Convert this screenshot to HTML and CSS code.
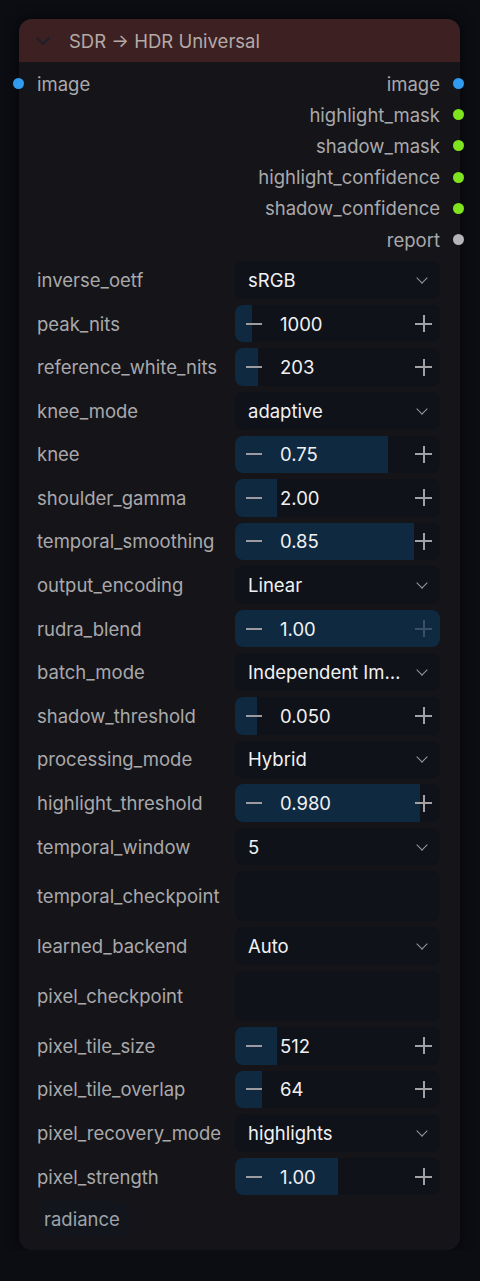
FILE: index.html
```html
<!DOCTYPE html>
<html lang="en">
<head>
  <meta charset="UTF-8" />
  <title>SDR → HDR Universal</title>
  <link rel="stylesheet" href="styles.css">
</head>
<body>
  <div class="node">
    <div class="node-title">
      <svg class="collapse" width="16" height="10" viewBox="0 0 16 10"><path d="M2 2 L8 8 L14 2" fill="none" stroke="#1d1f2b" stroke-width="1.8" stroke-linecap="round" stroke-linejoin="round"/></svg>
      <span>SDR → HDR Universal</span>
    </div>

    <div class="node-body">
      <div class="slots">
        <div class="slot">
          <div class="slot-in"><span class="dot blue"></span>image</div>
          <div class="slot-out">image<span class="dot blue"></span></div>
        </div>
        <div class="slot"><div></div><div class="slot-out">highlight_mask<span class="dot green"></span></div></div>
        <div class="slot"><div></div><div class="slot-out">shadow_mask<span class="dot green"></span></div></div>
        <div class="slot"><div></div><div class="slot-out">highlight_confidence<span class="dot green"></span></div></div>
        <div class="slot"><div></div><div class="slot-out">shadow_confidence<span class="dot green"></span></div></div>
        <div class="slot"><div></div><div class="slot-out">report<span class="dot grey"></span></div></div>
      </div>

      <div class="widgets">
        <div class="row">
          <div class="label">inverse_oetf</div>
          <div class="combo"><span class="value">sRGB</span><span class="chev"></span></div>
        </div>
        <div class="row">
          <div class="label">peak_nits</div>
          <div class="number"><div class="fill" style="width: 8.3%"></div><span class="minus"></span><span class="value">1000</span><span class="plus"></span></div>
        </div>
        <div class="row">
          <div class="label">reference_white_nits</div>
          <div class="number"><div class="fill" style="width: 11.2%"></div><span class="minus"></span><span class="value">203</span><span class="plus"></span></div>
        </div>
        <div class="row">
          <div class="label">knee_mode</div>
          <div class="combo"><span class="value">adaptive</span><span class="chev"></span></div>
        </div>
        <div class="row">
          <div class="label">knee</div>
          <div class="number"><div class="fill" style="width: 74.6%"></div><span class="minus"></span><span class="value">0.75</span><span class="plus"></span></div>
        </div>
        <div class="row">
          <div class="label">shoulder_gamma</div>
          <div class="number"><div class="fill" style="width: 20.5%"></div><span class="minus"></span><span class="value">2.00</span><span class="plus"></span></div>
        </div>
        <div class="row">
          <div class="label">temporal_smoothing</div>
          <div class="number"><div class="fill" style="width: 87.3%"></div><span class="minus"></span><span class="value">0.85</span><span class="plus"></span></div>
        </div>
        <div class="row">
          <div class="label">output_encoding</div>
          <div class="combo"><span class="value">Linear</span><span class="chev"></span></div>
        </div>
        <div class="row">
          <div class="label">rudra_blend</div>
          <div class="number"><div class="fill" style="width: 100%"></div><span class="minus"></span><span class="value">1.00</span><span class="plus dim"></span></div>
        </div>
        <div class="row">
          <div class="label">batch_mode</div>
          <div class="combo"><span class="value">Independent Im…</span><span class="chev"></span></div>
        </div>
        <div class="row">
          <div class="label">shadow_threshold</div>
          <div class="number"><div class="fill" style="width: 10.7%"></div><span class="minus"></span><span class="value">0.050</span><span class="plus"></span></div>
        </div>
        <div class="row">
          <div class="label">processing_mode</div>
          <div class="combo"><span class="value">Hybrid</span><span class="chev"></span></div>
        </div>
        <div class="row">
          <div class="label">highlight_threshold</div>
          <div class="number"><div class="fill" style="width: 90.2%"></div><span class="minus"></span><span class="value">0.980</span><span class="plus"></span></div>
        </div>
        <div class="row">
          <div class="label">temporal_window</div>
          <div class="combo"><span class="value">5</span><span class="chev"></span></div>
        </div>
        <div class="row tall">
          <div class="label">temporal_checkpoint</div>
          <div class="text-box"></div>
        </div>
        <div class="row">
          <div class="label">learned_backend</div>
          <div class="combo"><span class="value">Auto</span><span class="chev"></span></div>
        </div>
        <div class="row tall">
          <div class="label">pixel_checkpoint</div>
          <div class="text-box"></div>
        </div>
        <div class="row">
          <div class="label">pixel_tile_size</div>
          <div class="number"><div class="fill" style="width: 20.5%"></div><span class="minus"></span><span class="value">512</span><span class="plus"></span></div>
        </div>
        <div class="row">
          <div class="label">pixel_tile_overlap</div>
          <div class="number"><div class="fill" style="width: 13%"></div><span class="minus"></span><span class="value">64</span><span class="plus"></span></div>
        </div>
        <div class="row">
          <div class="label">pixel_recovery_mode</div>
          <div class="combo"><span class="value">highlights</span><span class="chev"></span></div>
        </div>
        <div class="row">
          <div class="label">pixel_strength</div>
          <div class="number"><div class="fill" style="width: 50.2%"></div><span class="minus"></span><span class="value">1.00</span><span class="plus"></span></div>
        </div>
      </div>

      <div class="badge">radiance</div>
    </div>
  </div>
</body>
</html>
```

FILE: styles.css
```css
body {
  margin: 0;
  padding: 19px 0 0 19px;
  background: #0b0d13;
  font-family: Inter, "Noto Sans", sans-serif;
  font-size: 18.5px;
  color: #a9a9ac;
}

.node {
  width: 441px;
  background: #151418;
  border-radius: 13px;
  box-shadow: 0 0 14px rgba(0, 0, 0, 0.6);
}

.node-title {
  height: 43px;
  background: #3d2022;
  border-radius: 13px 13px 0 0;
  display: flex;
  align-items: center;
  color: #b4aaa8;
}

.collapse {
  margin: 0 18px 0 16px;
}

.node-body {
  padding: 6px 20px 13px 18px;
}

/* slots */
.slots {
  display: flex;
  flex-direction: column;
}

.slot {
  height: 31.2px;
  display: flex;
  justify-content: space-between;
  align-items: center;
}

.slot-in,
.slot-out {
  display: flex;
  align-items: center;
  position: relative;
}

.dot {
  position: absolute;
  width: 11px;
  height: 11px;
  border-radius: 50%;
}

.slot-in .dot {
  left: -24.5px;
}

.slot-out .dot {
  right: -23.5px;
}

.dot.blue { background: #2f9cf1; }
.dot.green { background: #7fe41d; }
.dot.grey { background: #b5b5b8; }

/* widgets */
.widgets {
  display: flex;
  flex-direction: column;
  gap: 6px;
  margin-top: 6px;
}

.row {
  display: grid;
  grid-template-columns: 1fr 205px;
  align-items: center;
  height: 37.6px;
}

.row.tall {
  height: 50px;
}

.label {
  white-space: nowrap;
}

.combo,
.number,
.text-box {
  height: 100%;
  background: #0f1218;
  border-radius: 8px;
  display: flex;
  align-items: center;
  position: relative;
  overflow: hidden;
}

.value {
  color: #f1f1f3;
  position: relative;
  white-space: nowrap;
}

.combo .value {
  padding-left: 13px;
  flex: 1;
}

.chev {
  width: 7px;
  height: 7px;
  border-right: 1.5px solid #9a9a9e;
  border-bottom: 1.5px solid #9a9a9e;
  transform: translateY(-2px) rotate(45deg);
  margin: 0 14px 0 auto;
  flex: none;
}

.fill {
  position: absolute;
  left: 0;
  top: 0;
  bottom: 0;
  background: #0e2940;
}

.minus {
  position: relative;
  width: 16px;
  height: 2px;
  background: #9c9ca0;
  margin: 0 18px 0 11px;
  flex: none;
}

.plus {
  position: relative;
  width: 17px;
  height: 17px;
  margin: 0 8px 0 auto;
  flex: none;
}

.plus::before,
.plus::after {
  content: "";
  position: absolute;
  background: #a2a2a6;
}

.plus::before {
  left: 0;
  right: 0;
  top: 7.5px;
  height: 2px;
}

.plus::after {
  top: 0;
  bottom: 0;
  left: 7.5px;
  width: 2px;
}

.plus.dim::before,
.plus.dim::after {
  background: #3a4f63;
}

.badge {
  display: inline-block;
  margin: 6px 0 0 3px;
  padding: 0 9px 0 4px;
  height: 36px;
  line-height: 36px;
  background: #12161c;
  border-radius: 8px;
  color: #9fa3a8;
}
```
